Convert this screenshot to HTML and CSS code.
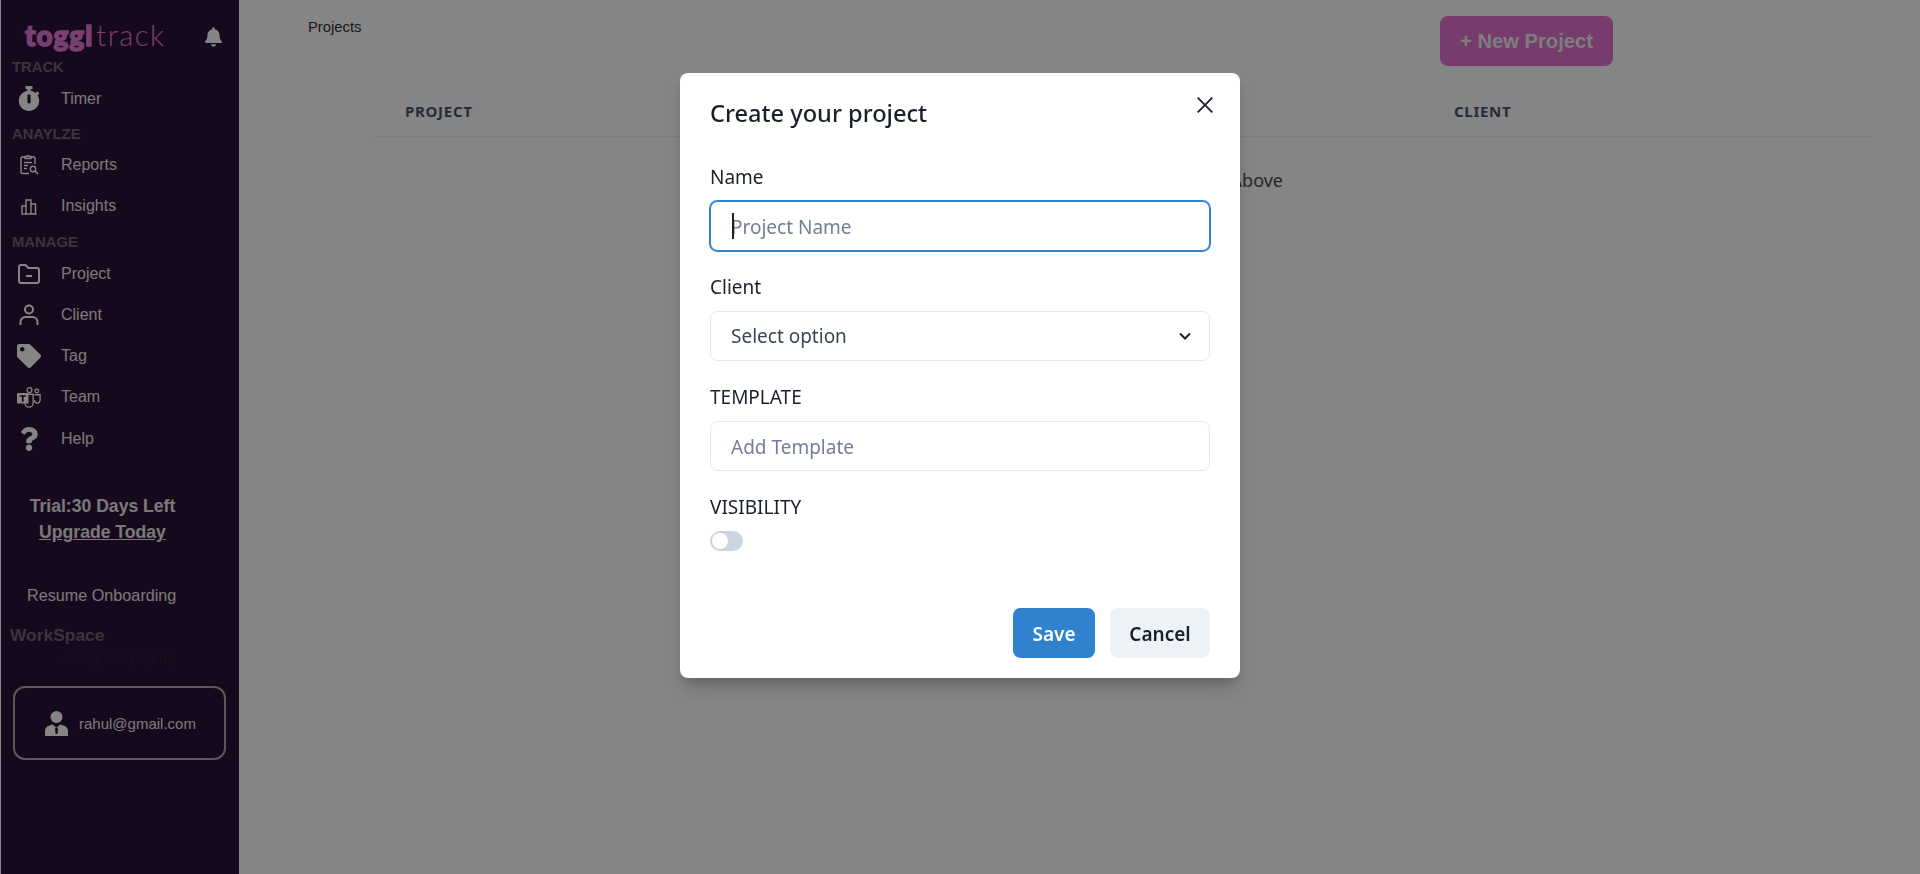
FILE: index.html
```html
<!DOCTYPE html>
<html>
<head>
	<meta charset="utf8">
	<title>Projects</title>
	<link rel="stylesheet" href="styles.css">
</head>
<body>
	<div id="sidebar">
		<div class="brand">
			<div class="logo"><span class="logo-bold">toggl</span><span class="logo-light">track</span></div>
			<svg class="bell" viewBox="0 0 448 512"><path d="M224 512c35.32 0 63.97-28.65 63.97-64H160.03c0 35.35 28.65 64 63.97 64zm215.39-149.71c-19.32-20.76-55.47-51.99-55.47-154.29 0-77.7-54.48-139.9-127.94-155.16V32c0-17.67-14.32-32-31.98-32s-31.98 14.33-31.98 32v20.84C118.56 68.1 64.08 130.3 64.08 208c0 102.3-36.15 133.53-55.47 154.29-6 6.45-8.66 14.16-8.61 21.71.11 16.4 12.98 32 32.1 32h383.8c19.12 0 32-15.6 32.1-32 .05-7.55-2.61-15.27-8.61-21.71z"/></svg>
		</div>

		<div class="section first">TRACK</div>
		<div class="item">
			<span class="icon"><svg width="22" height="25" viewBox="0 0 448 512"><path d="M432 304c0 114.9-93.1 208-208 208S16 418.9 16 304c0-104 76.3-190.2 176-205.5V64h-28c-6.6 0-12-5.4-12-12V12c0-6.6 5.4-12 12-12h120c6.6 0 12 5.4 12 12v40c0 6.6-5.4 12-12 12h-28v34.5c37.5 5.8 71.7 21.6 99.7 44.6l27.5-27.5c4.7-4.7 12.3-4.7 17 0l28.3 28.3c4.7 4.7 4.7 12.3 0 17l-29.4 29.4-.6.6C419.7 223.3 432 262.2 432 304zm-176 36V188.5c0-6.6-5.4-12-12-12h-40c-6.6 0-12 5.4-12 12V340c0 6.6 5.4 12 12 12h40c6.6 0 12-5.4 12-12z"/></svg></span>
			Timer
		</div>

		<div class="section">ANAYLZE</div>
		<div class="item">
			<span class="icon"><svg class="line" width="21" height="22" viewBox="0 0 21 22"><path d="M6 3H3.500A1.500 1.500 0 0 0 2 4.500V18a1.500 1.500 0 0 0 1.500 1.500H10"/><path d="M12 3h2.500A1.500 1.500 0 0 1 16 4.500V10"/><path d="M6 4.500V2.500h2a1 1 0 0 1 2 0h2v2z"/><path d="M5 8.500h8M5 11.500h4M5 14.500h3"/><circle cx="14" cy="15" r="2.700"/><path d="M16 17l3 3"/></svg></span>
			Reports
		</div>
		<div class="item">
			<span class="icon"><svg class="line" width="16" height="17" viewBox="0 0 16 17"><path d="M1 16V8h4v8M5 16V2h5v14M10 16V6h4.500v10M0.500 16h15"/></svg></span>
			Insights
		</div>

		<div class="section manage">MANAGE</div>
		<div class="item">
			<span class="icon"><svg class="line wide" width="24" height="22" viewBox="0 0 24 22"><path d="M2 4a2 2 0 0 1 2-2h4.500l3 3H20a2 2 0 0 1 2 2v11a2 2 0 0 1-2 2H4a2 2 0 0 1-2-2z"/><path d="M9 13h6"/></svg></span>
			Project
		</div>
		<div class="item">
			<span class="icon"><svg class="line wide" width="20" height="22" viewBox="0 0 20 22"><circle cx="10" cy="5.500" r="4"/><path d="M1.500 21v-3a5 5 0 0 1 5-5h7a5 5 0 0 1 5 5v3"/></svg></span>
			Client
		</div>
		<div class="item">
			<span class="icon"><svg width="26" height="26" viewBox="0 0 512 512"><path d="M0 252.118V48C0 21.49 21.49 0 48 0h204.118a48 48 0 0 1 33.941 14.059l211.882 211.882c18.745 18.745 18.745 49.137 0 67.882L293.823 497.941c-18.745 18.745-49.137 18.745-67.882 0L14.059 286.059A48 48 0 0 1 0 252.118zM112 64c-26.51 0-48 21.49-48 48s21.49 48 48 48 48-21.49 48-48-21.49-48-48-48z"/></svg></span>
			Tag
		</div>
		<div class="item">
			<span class="icon"><svg class="teams" width="26" height="23" viewBox="0 0 26 23"><circle class="ring" cx="13.500" cy="3.500" r="2.700"/><circle class="ring" cx="21.500" cy="4.500" r="2"/><path class="ring" d="M8.500 8h9v9.500a4.500 4.500 0 0 1-9 0z"/><path class="ring" d="M19 8.500h6v6a3 3 0 0 1-6 0"/><rect x="0" y="6.500" width="12.500" height="11.500" rx="1"/><path class="cut" d="M3 9h6.500v1.700H7.200V16H5.300v-5.300H3z"/></svg></span>
			Team
		</div>
		<div class="item">
			<span class="icon"><svg width="18" height="24" viewBox="0 0 384 512"><path d="M202.021 0C122.202 0 70.503 32.703 29.914 91.026c-7.363 10.58-5.093 25.086 5.178 32.874l43.138 32.709c10.373 7.865 25.132 6.026 33.253-4.148 25.049-31.381 43.63-49.449 82.757-49.449 30.764 0 68.816 19.799 68.816 49.631 0 22.552-18.617 34.134-48.993 51.164-35.423 19.86-82.299 44.576-82.299 106.405V320c0 13.255 10.745 24 24 24h72.471c13.255 0 24-10.745 24-24v-5.773c0-42.86 125.268-44.645 125.268-160.627C377.504 66.256 286.902 0 202.021 0zM192 373.459c-38.196 0-69.271 31.075-69.271 69.271 0 38.195 31.075 69.27 69.271 69.27s69.271-31.075 69.271-69.271-31.075-69.27-69.271-69.27z"/></svg></span>
			Help
		</div>

		<div class="trial">
			Trial:30 Days Left<br>
			<a href="#">Upgrade Today</a>
		</div>
		<div class="resume">Resume Onboarding</div>
		<div class="workspace">WorkSpace</div>
		<div class="leftover">// Log out pop up</div>
		<div class="account">
			<svg width="23" height="25" viewBox="0 0 23 25"><circle cx="11.500" cy="6" r="6"/><path d="M0 25v-5c0-3.500 3-5.500 7.500-6.500l4 3 4-3c4.500 1 7.500 3 7.500 6.500v5z"/><path class="tie" d="M10.500 16.500h2l.5 2-.7 4.500h-1.600l-.7-4.500z"/></svg>
			<span>rahul@gmail.com</span>
		</div>
	</div>

	<div id="main">
		<div class="top">
			<div class="crumb">Projects</div>
			<button class="new">+ New Project</button>
		</div>
		<div class="table">
			<div class="thead">
				<div>PROJECT</div>
				<div>CLIENT</div>
			</div>
			<div class="empty">Please Create a New Project From Above</div>
		</div>
	</div>

	<div id="overlay">
		<div id="modal">
			<svg class="close" viewBox="0 0 16 16"><path d="M1.500 1.500l13 13M14.500 1.500l-13 13"/></svg>
			<h2>Create your project</h2>
			<div class="body">
				<label>Name</label>
				<div class="focused">
					<span class="caret"></span>
					<input class="field focus" type="text" placeholder="Project Name">
				</div>
				<label>Client</label>
				<div class="select-wrap">
					<select class="field">
						<option>Select option</option>
					</select>
					<svg class="chevron" viewBox="0 0 12 8"><path d="M1 1.500l5 5 5-5"/></svg>
				</div>
				<label>TEMPLATE</label>
				<input class="field" type="text" placeholder="Add Template">
				<label>VISIBILITY</label>
				<div class="switch"><span></span></div>
			</div>
			<div class="footer">
				<button class="save">Save</button>
				<button class="cancel">Cancel</button>
			</div>
		</div>
	</div>
</body>
</html>
```

FILE: styles.css
```css
html, body{
	height: 100%;
}
body{
	margin: 0;
	display: flex;
	background-color: #fff;
	font-family: "Liberation Sans", Arial, sans-serif;
	overflow: hidden;
}
#sidebar{
	width: 238px;
	height: 874px;
	margin-left: 1px;
	flex: none;
	background-color: #2c1338;
	color: #e8e8e8;
	font-size: 16px;
}
.brand{
	height: 59px;
	display: flex;
	align-items: flex-start;
	justify-content: space-between;
	padding: 20px 17px 0 24px;
	box-sizing: border-box;
}
.logo{
	display: flex;
	align-items: baseline;
	color: #e57cd8;
	line-height: 30px;
}
.logo-bold{
	font-family: Lato, sans-serif;
	font-weight: 900;
	font-size: 28px;
	-webkit-text-stroke: 1.500px #e57cd8;
	letter-spacing: 1px;
}
.logo-light{
	font-family: Lato, sans-serif;
	font-weight: 300;
	font-size: 29px;
	letter-spacing: 1.500px;
	margin-left: 3px;
}
.bell{
	width: 17px;
	height: 20px;
	margin-top: 7px;
	fill: #fff;
}
.section{
	height: 16px;
	line-height: 16px;
	margin: 7px 0 2px 11px;
	font-size: 14.800px;
	font-weight: bold;
	color: #706478;
}
.section.first{
	margin-top: 0;
	margin-bottom: 3px;
}
.section.manage{
	margin-bottom: 3px;
}
.item{
	height: 41.300px;
	display: flex;
	align-items: center;
	padding-left: 16px;
}
.icon{
	width: 24px;
	margin-right: 20px;
	display: flex;
	justify-content: center;
	flex: none;
}
.icon svg{
	fill: #fff;
}
.icon svg.line{
	fill: none;
	stroke: #fff;
	stroke-width: 1.400;
}
.icon svg.line.wide{
	stroke-width: 2;
}
.teams .ring{
	fill: none;
	stroke: #fff;
	stroke-width: 1.400;
}
.teams .cut{
	fill: #2c1338;
}
.trial{
	margin-top: 34px;
	width: 203px;
	text-align: center;
	font-size: 17.600px;
	font-weight: bold;
	line-height: 26px;
}
.trial a{
	color: #e8e8e8;
}
.resume{
	margin: 40px 0 0 26px;
	font-size: 16.200px;
	line-height: 20px;
}
.workspace{
	margin: 19px 0 0 9px;
	font-size: 17.400px;
	font-weight: bold;
	line-height: 22px;
	color: #706478;
}
.leftover{
	margin: 3px 0 0 62px;
	font-size: 15px;
	line-height: 18px;
	color: #311c3e;
}
.account{
	margin: 19px 0 0 12px;
	width: 213px;
	height: 74px;
	box-sizing: border-box;
	border: 2px solid #aaa;
	border-radius: 12px;
	display: flex;
	align-items: center;
	padding-left: 30px;
	fill: #fff;
	font-size: 15px;
}
.account span{
	margin-left: 11px;
}
.account .tie{
	fill: #2c1338;
}

#main{
	flex: 1;
	min-width: 0;
}
.top{
	display: flex;
	justify-content: space-between;
	padding: 16px 307px 0 69px;
}
.crumb{
	margin-top: 3px;
	font-size: 14.800px;
	line-height: 16px;
	color: #333;
}
.new{
	width: 173px;
	height: 50px;
	border: none;
	border-radius: 8px;
	background-color: #e571d4;
	color: #f0f0f0;
	font-family: "Liberation Sans", Arial, sans-serif;
	font-size: 20.200px;
	font-weight: bold;
}
.table{
	margin: 0 48px 0 136px;
	font-family: "Noto Sans", sans-serif;
}
.thead{
	display: grid;
	grid-template-columns: 1049px 1fr;
	padding: 35px 0 15px 30px;
	border-bottom: 1px solid #edf2f7;
	font-size: 15px;
	font-weight: bold;
	line-height: 20px;
	letter-spacing: 0.700px;
	color: #4a5568;
}
.empty{
	margin-top: 31px;
	padding-right: 22px;
	text-align: center;
	font-size: 18px;
	line-height: 24px;
	color: #4a4a4a;
}

#overlay{
	position: fixed;
	top: 0;
	left: 0;
	right: 0;
	bottom: 0;
	background-color: rgba(0, 0, 0, 0.48);
	display: flex;
	justify-content: center;
	align-items: flex-start;
	font-family: "Noto Sans", sans-serif;
	color: #1a202c;
}
#modal{
	position: relative;
	width: 560px;
	margin-top: 73px;
	box-sizing: border-box;
	background-color: #fff;
	border-radius: 8px;
	box-shadow: 0 12px 18px -3px rgba(0, 0, 0, 0.2), 0 5px 8px -2px rgba(0, 0, 0, 0.1);
}
.close{
	position: absolute;
	top: 23px;
	right: 26px;
	width: 18px;
	height: 18px;
	fill: none;
	stroke: #1a202c;
	stroke-width: 1.600;
}
h2{
	margin: 0;
	padding: 22px 30px 19px;
	font-size: 23.600px;
	font-weight: 500;
	line-height: 37px;
}
.body{
	padding: 10px 30px;
}
label{
	display: block;
	margin: 21px 0 9px;
	font-size: 19px;
	line-height: 30px;
}
label:first-child{
	margin-top: 1px;
}
.field{
	display: block;
	width: 100%;
	height: 50px;
	box-sizing: border-box;
	margin: 0;
	padding: 2px 20px 0;
	background-color: #fff;
	border: 1px solid #e2e8f0;
	border-radius: 7.500px;
	outline: none;
	font-family: "Noto Sans", sans-serif;
	font-size: 19px;
	color: #3a4556;
	appearance: none;
}
select.field{
	padding-top: 0;
}
.field::placeholder{
	color: #718096;
	opacity: 1;
}
.field.focus{
	border-color: #3182ce;
	box-shadow: 0 0 0 1px #3182ce;
}
.focused, .select-wrap{
	position: relative;
}
.caret{
	position: absolute;
	left: 22px;
	top: 12px;
	width: 1.500px;
	height: 26px;
	background-color: #1a202c;
}
.chevron{
	position: absolute;
	right: 19px;
	top: 21px;
	width: 12px;
	height: 8px;
	fill: none;
	stroke: #1a202c;
	stroke-width: 2;
}
.switch{
	width: 33px;
	height: 20px;
	padding: 2px;
	box-sizing: border-box;
	border-radius: 10px;
	background-color: #cbd5e0;
}
.switch span{
	display: block;
	width: 16px;
	height: 16px;
	border-radius: 50%;
	background-color: #fff;
}
.footer{
	display: flex;
	justify-content: flex-end;
	gap: 15px;
	padding: 47px 30px 20px;
}
.footer button{
	height: 50px;
	padding: 2px 0 0;
	border: none;
	border-radius: 7.500px;
	font-family: "Noto Sans", sans-serif;
	font-size: 19px;
	font-weight: 600;
}
.save{
	width: 82px;
	background-color: #3182ce;
	color: #fff;
}
.cancel{
	width: 100px;
	background-color: #edf2f7;
	color: #1a202c;
}
```
